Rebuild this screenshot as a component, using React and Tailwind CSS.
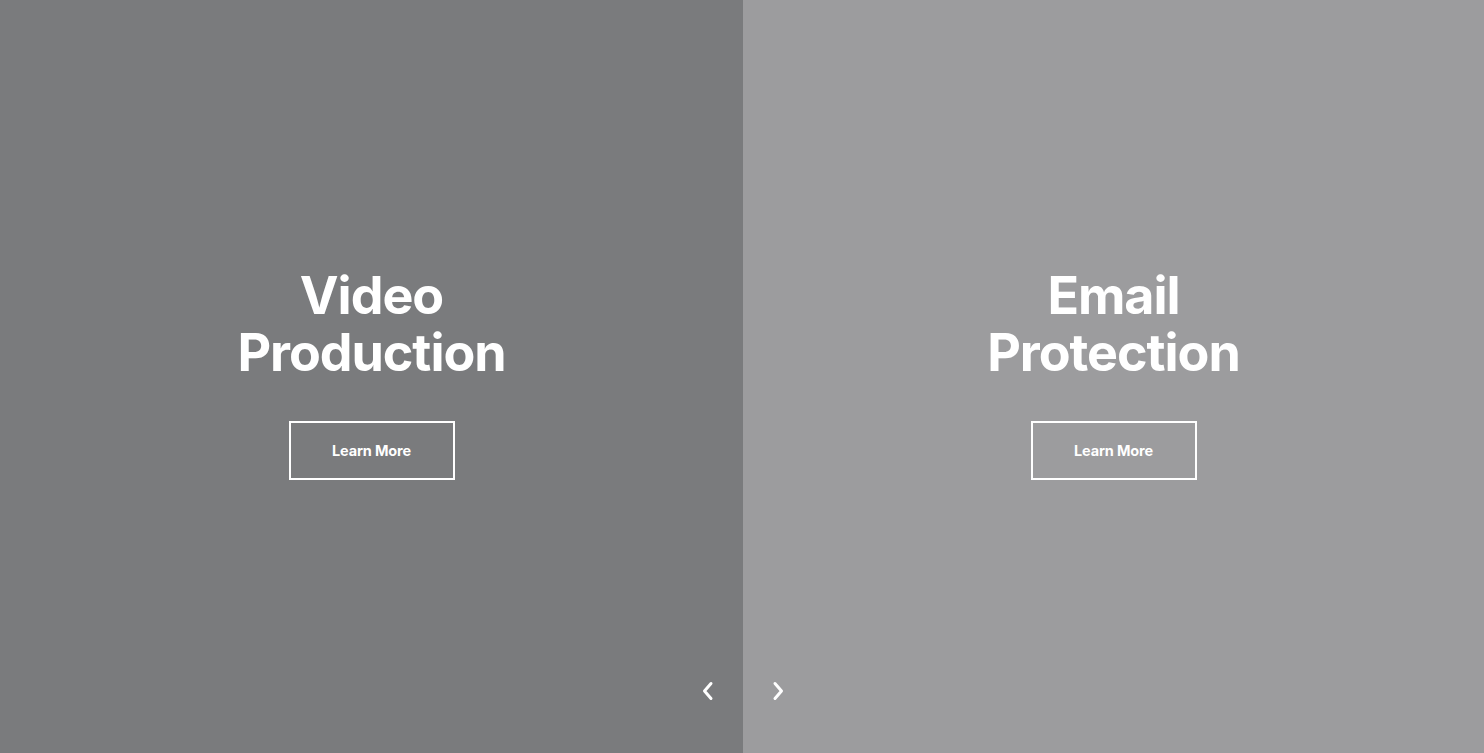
import React from "react";

const slides = [
  { title: ["Video", "Production"], bg: "bg-[#7a7b7d]", width: "w-[743px]" },
  { title: ["Email", "Protection"], bg: "bg-[#9c9c9e]", width: "flex-1" },
];

function Slide({ title, bg, width }) {
  return (
    <div className={`${width} h-full ${bg} flex flex-col items-center justify-center pb-[6px]`}>
      <h2 className="text-white text-center font-bold text-[52px] leading-[57px] tracking-[-0.02em]">
        {title[0]}
        <br />
        {title[1]}
      </h2>
      <button className="mt-[40px] w-[166px] h-[59px] border-2 border-white text-white text-[14.5px] font-bold tracking-[-0.01em]">
        Learn More
      </button>
    </div>
  );
}

export default function App() {
  return (
    <div
      className="relative w-full h-[753px] flex overflow-hidden"
      style={{ fontFamily: "Inter, 'Noto Sans', sans-serif" }}
    >
      {slides.map((s, i) => (
        <Slide key={i} title={s.title} bg={s.bg} width={s.width} />
      ))}

      {/* arrows */}
      <div className="absolute left-[699px] bottom-[50px] flex items-center gap-[52px]">
        <button className="w-[18px] h-[24px] flex items-center justify-center">
          <svg width="12" height="20" viewBox="0 0 12 20" fill="none">
            <path d="M9 2.5 L2.5 10 L9 17.5" stroke="white" strokeWidth="3" strokeLinecap="round" strokeLinejoin="round" />
          </svg>
        </button>
        <button className="w-[18px] h-[24px] flex items-center justify-center">
          <svg width="12" height="20" viewBox="0 0 12 20" fill="none">
            <path d="M3 2.5 L9.5 10 L3 17.5" stroke="white" strokeWidth="3" strokeLinecap="round" strokeLinejoin="round" />
          </svg>
        </button>
      </div>
    </div>
  );
}
